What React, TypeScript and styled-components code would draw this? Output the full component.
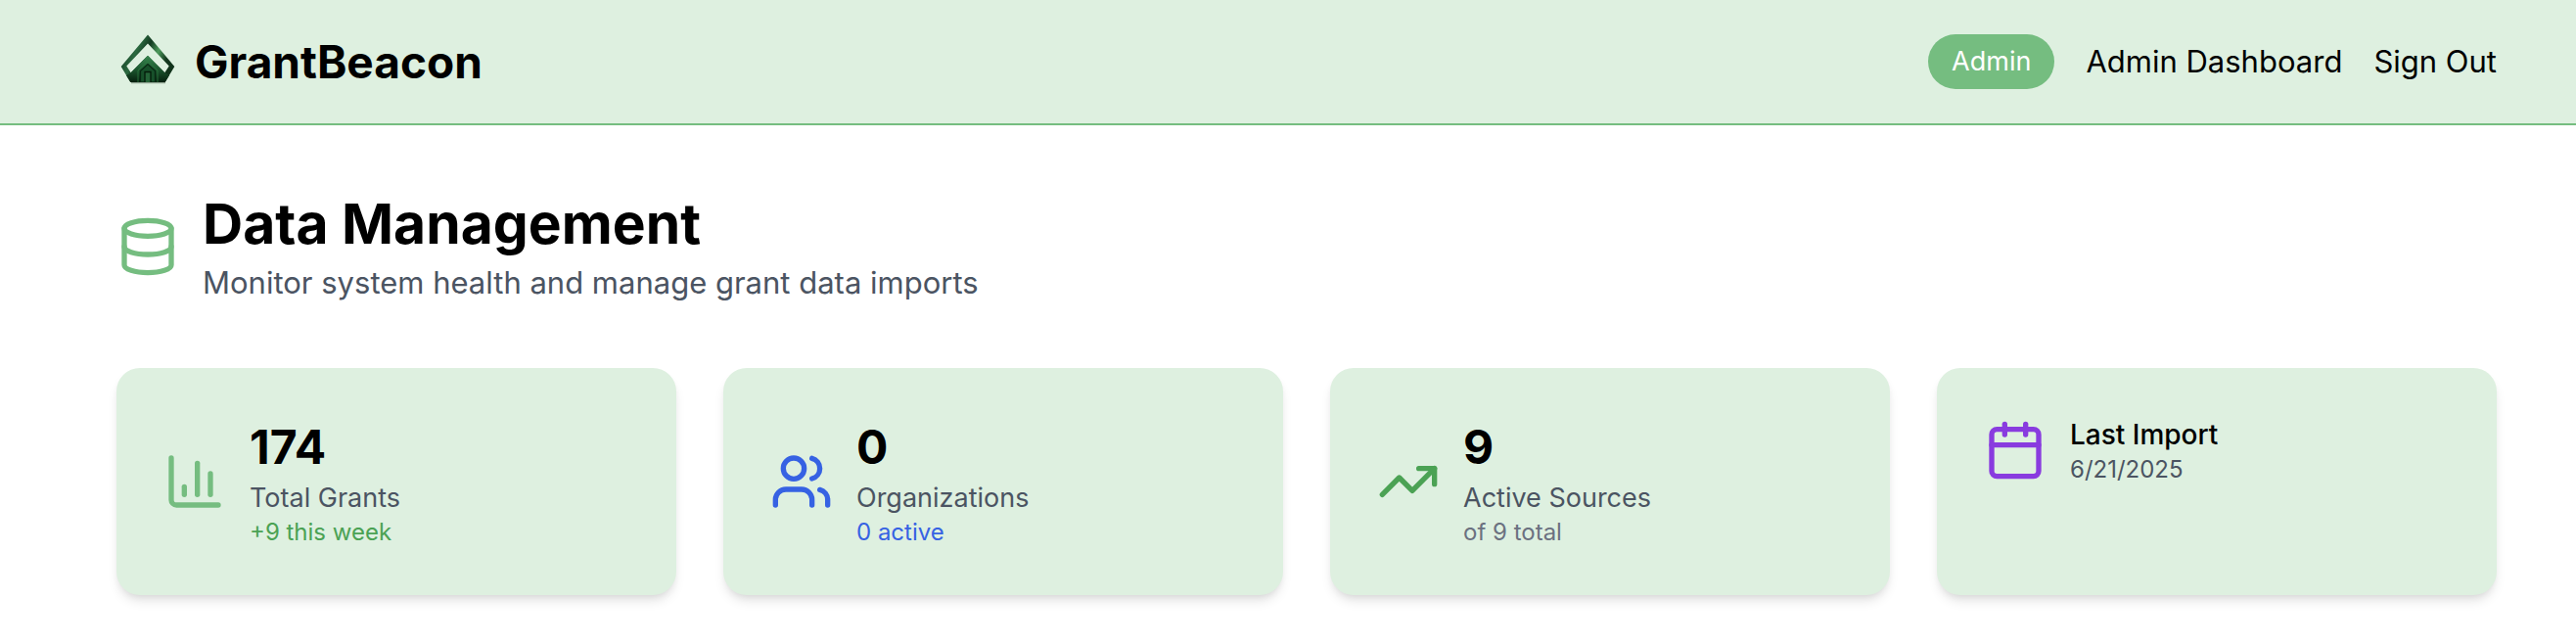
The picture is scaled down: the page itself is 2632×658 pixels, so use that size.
import React from "react";
import styled, { createGlobalStyle } from "styled-components";
import { Calendar, ChartColumn, Database, TrendingUp, Users } from "lucide-react";

const colors = {
  mint: "#def0e0",
  green: "#75bd80",
  deepGreen: "#4ba254",
  blue: "#3662e3",
  purple: "#893bdf",
  slate: "#4b5462",
  gray: "#6b7180",
};

const GlobalStyle = createGlobalStyle`
  *, *::before, *::after { box-sizing: border-box; }
  body {
    margin: 0;
    background: #fff;
    color: #000;
    font-family: Inter, "Liberation Sans", sans-serif;
    font-size: 31px;
    line-height: 46px;
  }
  h1, h2, p { margin: 0; }
`;

const Header = styled.header`
  display: flex;
  align-items: center;
  justify-content: space-between;
  padding: 31px 81px 31px 119px;
  background: ${colors.mint};
  border-bottom: 2px solid ${colors.green};
`;

const Brand = styled.a`
  display: flex;
  align-items: center;
  gap: 16px;
  color: inherit;
  font-size: 46px;
  font-weight: 700;
  line-height: 64px;
  text-decoration: none;
`;

const Nav = styled.nav`
  display: flex;
  align-items: center;
  gap: 32px;
`;

const RoleBadge = styled.span`
  padding: 8px 24px;
  border-radius: 28px;
  background: ${colors.green};
  color: #fff;
  font-size: 27px;
  line-height: 40px;
`;

const NavLink = styled.a`
  color: inherit;
  text-decoration: none;
`;

const NavButton = styled.button`
  padding: 0;
  border: 0;
  background: none;
  color: inherit;
  font: inherit;
  cursor: pointer;
`;

const Main = styled.main`
  display: grid;
  gap: 64px;
  padding: 64px 81px 50px 119px;
`;

const PageHeading = styled.div`
  display: flex;
  align-items: center;
  gap: 24px;
`;

const Title = styled.h1`
  font-size: 57px;
  font-weight: 700;
  line-height: 74px;
`;

const Subtitle = styled.p`
  color: ${colors.slate};
`;

const CardGrid = styled.section`
  display: grid;
  grid-template-columns: repeat(4, minmax(0, 1fr));
  gap: 48px;
`;

const Card = styled.article<{ $top?: boolean }>`
  display: flex;
  align-items: ${(p) => (p.$top ? "flex-start" : "center")};
  gap: 24px;
  padding: 48px;
  border-radius: 24px;
  background: ${colors.mint};
  box-shadow: 0 8px 12px -2px rgba(0, 0, 0, 0.1), 0 4px 8px -4px rgba(0, 0, 0, 0.1);
`;

const CalendarIcon = styled(Calendar)`
  margin-top: 4px;
`;

const Value = styled.p`
  font-size: 48px;
  font-weight: 700;
  line-height: 66px;
`;

const Label = styled.h2`
  color: ${colors.slate};
  font-size: 27px;
  font-weight: 400;
  line-height: 38px;
`;

const StrongLabel = styled(Label)`
  color: #000;
  font-size: 28px;
  font-weight: 500;
  line-height: 40px;
`;

const Note = styled.p<{ $color: string }>`
  color: ${(p) => p.$color};
  font-size: 24px;
  line-height: 32px;
`;

const Logo = () => (
  <svg width="64" height="64" viewBox="0 1 64 64" aria-hidden="true">
    <defs>
      <linearGradient id="frame" x1="5" y1="20" x2="59" y2="44" gradientUnits="userSpaceOnUse">
        <stop offset="0" stopColor="#12351f" />
        <stop offset="0.25" stopColor="#2b6a40" />
        <stop offset="0.42" stopColor="#143a22" />
        <stop offset="0.6" stopColor="#4d9a5c" />
        <stop offset="0.78" stopColor="#14391f" />
        <stop offset="1" stopColor="#0f3019" />
      </linearGradient>
      <linearGradient id="house" x1="0" y1="26" x2="0" y2="54" gradientUnits="userSpaceOnUse">
        <stop offset="0" stopColor="#3d8a54" />
        <stop offset="0.5" stopColor="#1d5a31" />
        <stop offset="1" stopColor="#06200e" />
      </linearGradient>
    </defs>
    <path d="M15 54.5H50" stroke="#8b9f8d" strokeWidth="1.5" />
    <path
      fill="url(#frame)"
      fillRule="evenodd"
      d="M32 5.5 59.3 38 49.7 54H14.3L4.7 38ZM32 14.5 10.3 37.5 14.7 44.3 32 26.7 49.3 44.3 53.7 37.5Z"
    />
    <path fill="url(#house)" d="M32 26.7 49.3 44.3 54 47 49.7 54H14.3L10 47 14.7 44.3Z" />
    <path d="M24.5 53.5V42.5L32 35.5 39.5 42.5V53.5" fill="#17502a" stroke="#082813" strokeWidth="1.2" />
    <path d="M32 29V35M22 54V42L32 32.5 42 42V54" fill="none" stroke="#2f7b42" strokeWidth="0.8" />
    <path d="M29 54V43.5H35V54" fill="#246337" stroke="#041a0a" strokeWidth="1.3" />
  </svg>
);

export default function App() {
  return (
    <>
      <GlobalStyle />
      <Header>
        <Brand href="#">
          <Logo />
          GrantBeacon
        </Brand>
        <Nav>
          <RoleBadge>Admin</RoleBadge>
          <NavLink href="#dashboard">Admin Dashboard</NavLink>
          <NavButton type="button">Sign Out</NavButton>
        </Nav>
      </Header>
      <Main>
        <PageHeading>
          <Database size={64} color={colors.green} />
          <div>
            <Title>Data Management</Title>
            <Subtitle>Monitor system health and manage grant data imports</Subtitle>
          </div>
        </PageHeading>
        <CardGrid>
          <Card>
            <ChartColumn size={64} color={colors.green} />
            <div>
              <Value>174</Value>
              <Label>Total Grants</Label>
              <Note $color={colors.deepGreen}>+9 this week</Note>
            </div>
          </Card>
          <Card>
            <Users size={64} color={colors.blue} />
            <div>
              <Value>0</Value>
              <Label>Organizations</Label>
              <Note $color={colors.blue}>0 active</Note>
            </div>
          </Card>
          <Card>
            <TrendingUp size={64} color={colors.deepGreen} />
            <div>
              <Value>9</Value>
              <Label>Active Sources</Label>
              <Note $color={colors.gray}>of 9 total</Note>
            </div>
          </Card>
          <Card $top>
            <CalendarIcon size={64} color={colors.purple} />
            <div>
              <StrongLabel>Last Import</StrongLabel>
              <Note $color={colors.slate}>6/21/2025</Note>
            </div>
          </Card>
        </CardGrid>
      </Main>
    </>
  );
}
